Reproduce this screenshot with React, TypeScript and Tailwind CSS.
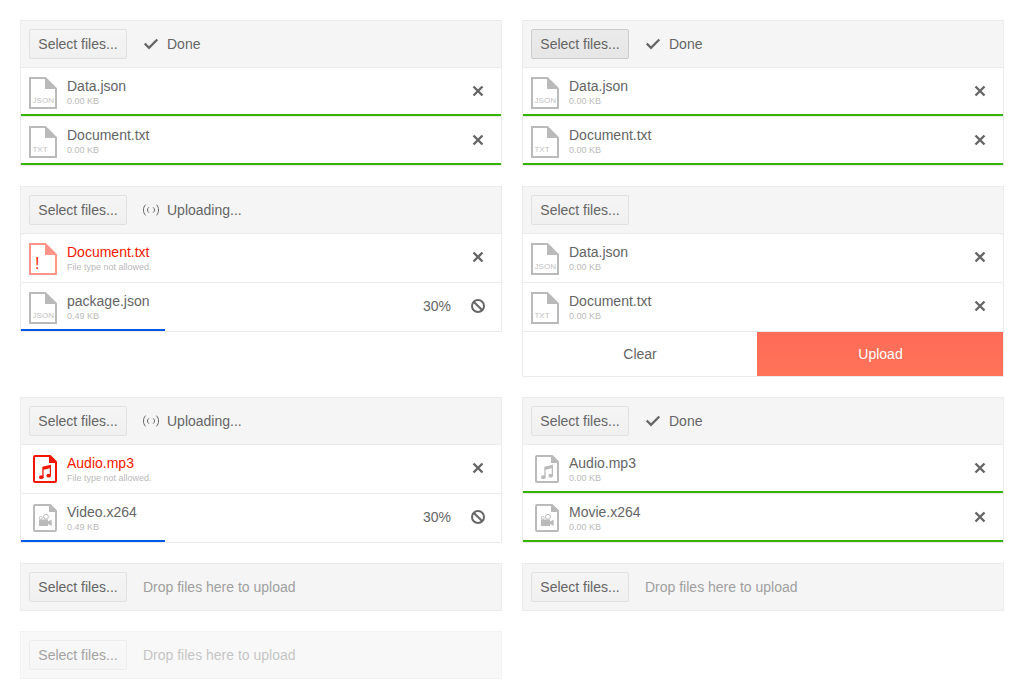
import type { ReactNode } from "react";

type Kind = "json" | "txt" | "invalid" | "audio" | "video";
type Item = {
  name: string;
  note: string;
  kind: Kind;
  error?: boolean;
  progress?: number;
  done?: boolean;
};

function PageIcon({ kind }: { kind: "json" | "txt" | "invalid" }) {
  const invalid = kind === "invalid";
  return (
    <svg width="28" height="32" viewBox="0 0 28 32" className={invalid ? "text-[#ff9488]" : "text-[#bababa]"}>
      <path d="M1 1H16.4L27 11.6V31H1Z" fill="none" stroke="currentColor" strokeWidth="2" />
      <path d="M16 0V12H28Z" fill="currentColor" />
      {invalid ? (
        <text x="6" y="26" fontSize="16" fill="#f31700" className="font-['Liberation_Sans',sans-serif]">!</text>
      ) : (
        <text x="3.5" y="26" fontSize="7" textLength={kind === "json" ? 21.5 : 15} lengthAdjust="spacingAndGlyphs" fill="#c2c2c2" className="font-['Liberation_Sans',sans-serif]">
          {kind.toUpperCase()}
        </text>
      )}
    </svg>
  );
}

function MediaIcon({ kind, error }: { kind: "audio" | "video"; error?: boolean }) {
  return (
    <svg width="24" height="28" viewBox="0 0 24 28" className={error ? "text-[#f31700]" : "text-[#bababa]"}>
      <path d="M2 1H16.5L23 7.5V26A1 1 0 0 1 22 27H2A1 1 0 0 1 1 26V2A1 1 0 0 1 2 1Z" fill="none" stroke="currentColor" strokeWidth="2" />
      <path d="M16 0H17.5L24 6.5V8H16Z" fill="currentColor" />
      {kind === "audio" ? (
        <g fill="currentColor">
          <path d="M9.3 11.8L18 9.8V20.8H16.8V13.2L10.6 14.7V22.4H9.3Z" />
          <ellipse cx="8.3" cy="22.2" rx="2.3" ry="1.9" />
          <ellipse cx="15.7" cy="20.7" rx="2.3" ry="1.9" />
        </g>
      ) : (
        <g fill="currentColor">
          <path d="M6 15.6H15V17.4L18.7 15.4V22L15 20V22H6Z" />
          <circle cx="7.8" cy="13.8" r="1.5" fill="none" stroke="currentColor" strokeWidth="0.9" />
          <circle cx="13" cy="12.8" r="2.4" fill="none" stroke="currentColor" strokeWidth="1" />
        </g>
      )}
    </svg>
  );
}

function FileIcon({ kind, error }: { kind: Kind; error?: boolean }) {
  if (kind === "audio" || kind === "video") {
    return (
      <div className="flex h-8 w-7 justify-end pt-px">
        <MediaIcon kind={kind} error={error} />
      </div>
    );
  }
  return <PageIcon kind={kind} />;
}

function CloseIcon() {
  return (
    <svg width="16" height="16" viewBox="0 0 16 16">
      <path d="M3.5 3.5L12.5 12.5M12.5 3.5L3.5 12.5" stroke="#666" strokeWidth="2.4" />
    </svg>
  );
}

function CancelIcon() {
  return (
    <svg width="16" height="16" viewBox="0 0 16 16" fill="none" stroke="#666" strokeWidth="2">
      <circle cx="8" cy="8" r="6" />
      <path d="M3.7 3.7L12.3 12.3" />
    </svg>
  );
}

function DoneIcon() {
  return (
    <svg width="16" height="16" viewBox="0 0 16 16">
      <path d="M1.7 7.5L6 11.8L14.3 3.5" fill="none" stroke="#666" strokeWidth="2.3" />
    </svg>
  );
}

function UploadingIcon() {
  return (
    <svg width="16" height="16" viewBox="0 0 16 16" fill="none" stroke="#666" strokeWidth="1">
      <path d="M2.6 2.6C-0.3 5.6 -0.3 10.4 2.6 13.4M13.4 2.6C16.3 5.6 16.3 10.4 13.4 13.4" />
      <path d="M5.9 5.3C4 6.7 4 9.3 5.9 10.7M10.1 5.3C12 6.7 12 9.3 10.1 10.7" />
    </svg>
  );
}

function FileRow({ item }: { item: Item }) {
  const { name, note, kind, error, progress, done } = item;
  return (
    <li className="relative flex h-[49px] items-start border-t border-[#ebebeb] px-2 pt-[9px]">
      <FileIcon kind={kind} error={error} />
      <div className="ml-[10px] flex-1">
        <div className={error ? "text-[14px] leading-[18px] text-[#f31700]" : "text-[14px] leading-[18px] text-[#656565]"}>{name}</div>
        <div className="mt-px text-[9px] leading-[10px] text-[#bababa]">{note}</div>
      </div>
      <div className="mr-[7px] flex h-7 items-center">
        {progress !== undefined && <span className="mr-[19px] text-[14px] leading-5 text-[#656565]">{progress}%</span>}
        <button aria-label={progress !== undefined ? "Cancel" : "Remove"} className="block">
          {progress !== undefined ? <CancelIcon /> : <CloseIcon />}
        </button>
      </div>
      {done && <div className="absolute inset-x-0 bottom-0 h-0.5 bg-[#37b400]" />}
      {progress !== undefined && <div className="absolute bottom-0 left-0 h-0.5 bg-[#0058e9]" style={{ width: `${progress}%` }} />}
    </li>
  );
}

type UploadProps = {
  status?: "done" | "uploading" | "drop";
  items?: Item[];
  active?: boolean;
  disabled?: boolean;
  footer?: ReactNode;
};

function Upload({ status, items = [], active, disabled, footer }: UploadProps) {
  return (
    <section className={disabled ? "border border-[#ebebeb] bg-white opacity-60" : "border border-[#ebebeb] bg-white"}>
      <header className="flex h-[46px] items-center bg-[#f5f5f5] px-2">
        <button
          className={
            active
              ? "h-[30px] w-[98px] rounded-[2px] border border-[#cccccc] bg-linear-to-b from-[#ebebeb] to-[#e6e6e6] text-[14px] text-[#656565]"
              : "h-[30px] w-[98px] rounded-[2px] border border-[#e1e1e1] bg-linear-to-b from-[#f5f5f5] to-[#f0f0f0] text-[14px] text-[#656565]"
          }
        >
          Select files...
        </button>
        {status === "drop" && <span className="ml-4 text-[14px] text-[#9f9f9f]">Drop files here to upload</span>}
        {status === "done" && (
          <span className="ml-4 flex items-center gap-2 text-[14px] text-[#656565]"><DoneIcon />Done</span>
        )}
        {status === "uploading" && (
          <span className="ml-4 flex items-center gap-2 text-[14px] text-[#656565]"><UploadingIcon />Uploading...</span>
        )}
      </header>
      {items.length > 0 && <ul>{items.map((item) => <FileRow key={item.name} item={item} />)}</ul>}
      {footer}
    </section>
  );
}

const documents: Item[] = [
  { name: "Data.json", note: "0.00 KB", kind: "json" },
  { name: "Document.txt", note: "0.00 KB", kind: "txt" },
];
const uploaded = documents.map((item) => ({ ...item, done: true }));

export default function App() {
  return (
    <main className="grid min-h-[699px] w-[1024px] grid-cols-2 content-start items-start gap-5 bg-white p-5 font-['Liberation_Sans',Arial,sans-serif]">
      <Upload status="done" items={uploaded} />
      <Upload status="done" items={uploaded} active />
      <Upload
        status="uploading"
        items={[
          { name: "Document.txt", note: "File type not allowed.", kind: "invalid", error: true },
          { name: "package.json", note: "0.49 KB", kind: "json", progress: 30 },
        ]}
      />
      <Upload
        items={documents}
        footer={
          <div className="flex h-[45px] border-t border-[#ebebeb] text-[14px]">
            <button className="w-[234px] text-[#656565]">Clear</button>
            <button className="flex-1 bg-linear-to-b from-[#ff6c59] to-[#ff7358] pl-px text-white">Upload</button>
          </div>
        }
      />
      <Upload
        status="uploading"
        items={[
          { name: "Audio.mp3", note: "File type not allowed.", kind: "audio", error: true },
          { name: "Video.x264", note: "0.49 KB", kind: "video", progress: 30 },
        ]}
      />
      <Upload
        status="done"
        items={[
          { name: "Audio.mp3", note: "0.00 KB", kind: "audio", done: true },
          { name: "Movie.x264", note: "0.00 KB", kind: "video", done: true },
        ]}
      />
      <Upload status="drop" />
      <Upload status="drop" />
      <Upload status="drop" disabled />
    </main>
  );
}
